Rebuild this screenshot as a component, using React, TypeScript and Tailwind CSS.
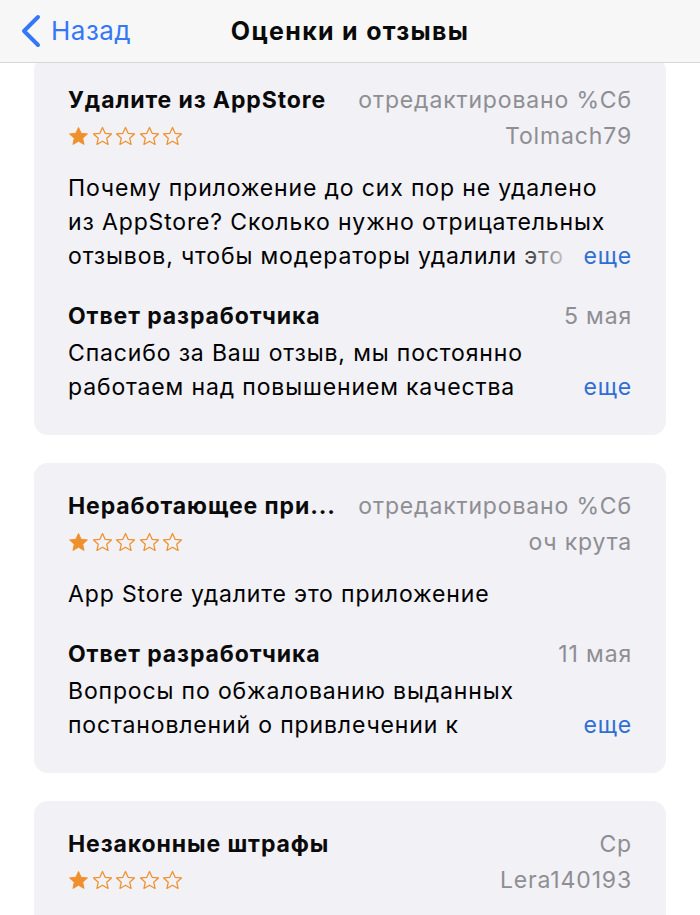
import React from "react";

type Review = {
  title: string;
  date: string;
  author: string;
  body: string;
  clampBody?: boolean;
  replyDate?: string;
  reply?: string;
};

const reviews: Review[] = [
  {
    title: "Удалите из AppStore",
    date: "отредактировано %Сб",
    author: "Tolmach79",
    body: "Почему приложение до сих пор не удалено из AppStore? Сколько нужно отрицательных отзывов, чтобы модераторы удалили это приложение?",
    clampBody: true,
    replyDate: "5 мая",
    reply: "Спасибо за Ваш отзыв, мы постоянно работаем над повышением качества",
  },
  {
    title: "Неработающее при...",
    date: "отредактировано %Сб",
    author: "оч крута",
    body: "App Store удалите это приложение",
    replyDate: "11 мая",
    reply: "Вопросы по обжалованию выданных постановлений о привлечении к",
  },
  {
    title: "Незаконные штрафы",
    date: "Ср",
    author: "Lera140193",
    body: "",
  },
];

const Star = ({ filled }: { filled: boolean }) => (
  <svg width="23" height="23" viewBox="0 0 24 24" className="mr-[0.5px]">
    <path
      d="M12 2.6l2.75 6.05 6.6.68-4.95 4.45 1.4 6.5L12 16.95 6.2 20.28l1.4-6.5L2.65 9.33l6.6-.68z"
      fill={filled ? "#f0902c" : "none"}
      stroke="#f0902c"
      strokeWidth={filled ? 1 : 1.3}
      strokeLinejoin="round"
    />
  </svg>
);

const More = () => (
  <span className="absolute right-0 bottom-0 flex items-center">
    <span className="w-[60px] h-[34px] bg-gradient-to-r from-[#f1f1f6]/0 to-[#f1f1f6]" />
    <span className="bg-[#f1f1f6] pl-[10px] text-[#2f6fd4]">еще</span>
  </span>
);

const ReviewCard = ({ r }: { r: Review }) => (
  <div className="bg-[#f1f1f6] rounded-[14px] px-[34px] pt-[26px] pb-[31px]">
    <div className="flex justify-between items-center h-[34px]">
      <span className="font-bold tracking-[0.9px] text-[#0a0a0a]">{r.title}</span>
      <span className="text-[#8e8e93]">{r.date}</span>
    </div>
    <div className="flex justify-between items-center h-[34px] mt-[2px]">
      <div className="flex items-center -ml-[1px]">
        {[0, 1, 2, 3, 4].map((i) => (
          <Star key={i} filled={i === 0} />
        ))}
      </div>
      <span className="text-[#8e8e93]">{r.author}</span>
    </div>
    {r.body && (
      <div className="relative mt-[18px]">
        <p className={r.clampBody ? "max-h-[102px] overflow-hidden pr-[12px]" : ""}>{r.body}</p>
        {r.clampBody && <More />}
      </div>
    )}
    {r.reply && (
      <>
        <div className="flex justify-between items-center h-[34px] mt-[26px]">
          <span className="font-bold tracking-[0.9px] text-[#0a0a0a]">Ответ разработчика</span>
          <span className="text-[#8e8e93]">{r.replyDate}</span>
        </div>
        <div className="relative mt-[3px]">
          <p className="pr-[80px]">{r.reply}</p>
          <More />
        </div>
      </>
    )}
  </div>
);

export default function App() {
  return (
    <div
      className="w-[700px] h-[915px] overflow-hidden bg-white text-[23px] leading-[34px] tracking-[0.85px] text-black"
      style={{ fontFamily: "Inter, 'Noto Sans', sans-serif" }}
    >
      <header className="relative z-10 h-[63px] bg-[#f7f7f7] border-b border-[#d6d6d6] flex items-center">
        <div className="absolute left-[20px] top-0 h-full flex items-center text-[#3478f6] text-[26px] tracking-[0.5px]">
          <svg width="24" height="34" viewBox="0 0 24 34" className="mr-[7px]">
            <path
              d="M18 3L4 17l14 14"
              fill="none"
              stroke="#3478f6"
              strokeWidth="4"
              strokeLinecap="round"
              strokeLinejoin="round"
            />
          </svg>
          Назад
        </div>
        <h1 className="w-full text-center font-bold text-[25px] tracking-[1.3px] text-[#0a0a0a]">Оценки и отзывы</h1>
      </header>
      <main className="-mt-[6px] px-[34px] flex flex-col gap-[28px]">
        {reviews.map((r) => (
          <ReviewCard key={r.title} r={r} />
        ))}
      </main>
    </div>
  );
}
